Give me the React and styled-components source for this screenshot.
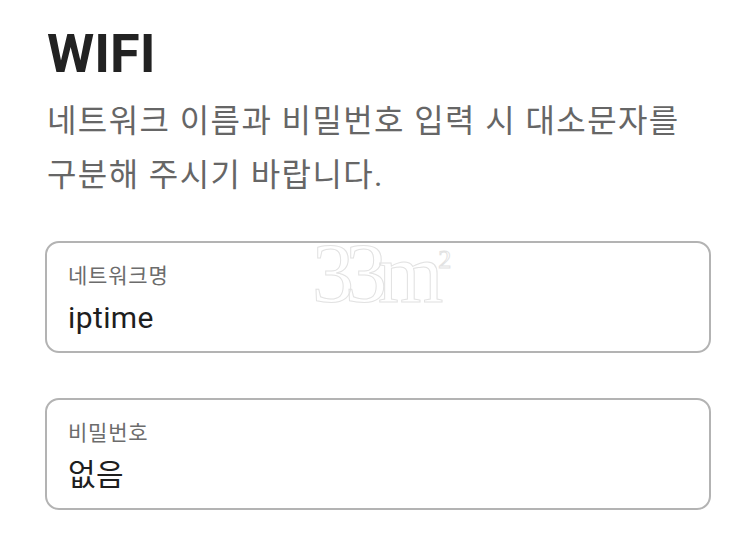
import React from 'react';
import styled, { createGlobalStyle } from 'styled-components';

const GlobalStyle = createGlobalStyle`
    html, body {
        margin: 0;
        padding: 0;
        background: #fff;
    }
    body {
        font-family: Roboto, "Noto Sans CJK KR", sans-serif;
    }
`;

const Page = styled.div`
    position: relative;
    width: 756px;
    height: 546px;
    padding: 22px 45px 0 45px;
    box-sizing: border-box;
    overflow: hidden;
`;

const Title = styled.h1`
    margin: 0 0 0 2px;
    font-size: 54px;
    font-weight: 700;
    line-height: 64px;
    color: #222;
    letter-spacing: 0;
`;

const Desc = styled.p`
    margin: 8px 0 0 2px;
    font-size: 32px;
    line-height: 54px;
    color: #666;
    letter-spacing: 1.4px;
`;

const Fields = styled.div`
    display: flex;
    flex-direction: column;
    gap: 45px;
    margin-top: 39px;
`;

const Field = styled.div`
    height: 112px;
    border: 2px solid #b3b3b3;
    border-radius: 14px;
    box-sizing: border-box;
    padding: 19px 21px 0 21px;
    display: flex;
    flex-direction: column;
`;

const Label = styled.div`
    font-size: 21px;
    line-height: 28px;
    color: #6c6c6c;
    letter-spacing: 0.8px;
`;

const Value = styled.div`
    margin-top: 10px;
    font-size: 30px;
    line-height: 36px;
    color: #1e1e1e;
    letter-spacing: 0.4px;
`;

const Watermark = styled.div`
    position: absolute;
    left: 312px;
    top: 232px;
    font-family: "Liberation Serif", serif;
    font-size: 84px;
    line-height: 1;
    color: #fff;
    -webkit-text-stroke: 1px #e2e2e2;
    letter-spacing: -9px;
    pointer-events: none;

    sup {
        font-size: 26px;
        vertical-align: 34px;
        letter-spacing: 0;
        margin-left: 4px;
    }
`;

const fields = [
    { label: '네트워크명', value: 'iptime' },
    { label: '비밀번호', value: '없음' }
];

export default function App() {
    return (
        <Page>
            <GlobalStyle />
            <Title>WIFI</Title>
            <Desc>
                네트워크 이름과 비밀번호 입력 시 대소문자를<br />
                구분해 주시기 바랍니다.
            </Desc>
            <Fields>
                {fields.map((f, i) => (
                    <Field key={i}>
                        <Label>{f.label}</Label>
                        <Value>{f.value}</Value>
                    </Field>
                ))}
            </Fields>
            <Watermark>33m<sup>2</sup></Watermark>
        </Page>
    );
}
